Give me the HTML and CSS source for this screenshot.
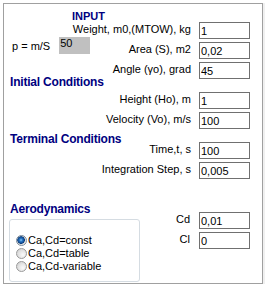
FILE: index.html
```html
<!DOCTYPE html>
<html lang="en">
<head>
    <meta charset="UTF-8">
    <title>Input</title>
    <link rel="stylesheet" href="styles.css">
</head>
<body>

    <div class="panel">
        <div class="title">INPUT</div>
        <div class="group">
            <div class="row">
                <label>Weight, m0,(MTOW), kg</label>
                <input type="text" value="1">
            </div>
            <div class="row">
                <div class="density">
                    <span>p = m/S</span>
                    <span class="density-value">50</span>
                </div>
                <label>Area (S), m2</label>
                <input type="text" value="0,02">
            </div>
            <div class="row">
                <label>Angle (γo), grad</label>
                <input type="text" value="45">
            </div>
        </div>

        <div class="section-title initial">Initial Conditions</div>
        <div class="group">
            <div class="row">
                <label>Height (Ho), m</label>
                <input type="text" value="1">
            </div>
            <div class="row">
                <label>Velocity (Vo), m/s</label>
                <input type="text" value="100">
            </div>
        </div>

        <div class="section-title terminal">Terminal Conditions</div>
        <div class="group">
            <div class="row">
                <label>Time,t, s</label>
                <input type="text" value="100">
            </div>
            <div class="row">
                <label>Integration Step, s</label>
                <input type="text" value="0,005">
            </div>
        </div>

        <div class="aero">
            <div class="aero-left">
                <div class="section-title aero-title">Aerodynamics</div>
                <div class="choices">
                    <div class="choice"><span class="dot checked"></span>Ca,Cd=const</div>
                    <div class="choice"><span class="dot"></span>Ca,Cd=table</div>
                    <div class="choice"><span class="dot"></span>Ca,Cd-variable</div>
                </div>
            </div>
            <div class="aero-right">
                <div class="row">
                    <label>Cd</label>
                    <input type="text" value="0,01">
                </div>
                <div class="row">
                    <label>Cl</label>
                    <input type="text" value="0">
                </div>
            </div>
        </div>
    </div>

</body>
</html>
```

FILE: styles.css
```css
body {
    margin: 0;
    background: #ffffff;
    font-family: "Liberation Sans", Arial, sans-serif;
    font-size: 11px;
    color: #000000;
}

.panel {
    box-sizing: border-box;
    width: 260px;
    height: 281px;
    margin: 3px;
    padding: 6px 12px 0 0;
    border: 1px solid #a0a0a0;
    background: #ffffff;
    box-shadow: 2px 0 0 #f0f0f0;
}

.title {
    height: 12px;
    line-height: 12px;
    padding-left: 68px;
    font-weight: bold;
    color: #000080;
}

.group {
    display: flex;
    flex-direction: column;
    gap: 3px;
}

.row {
    display: flex;
    justify-content: flex-end;
    align-items: flex-start;
    height: 17px;
}

    .row label {
        padding-top: 1px;
        margin-right: 8px;
        line-height: 13px;
    }

    .row input {
        box-sizing: border-box;
        width: 51px;
        height: 17px;
        margin: 0;
        padding: 0 1px;
        border: 1px solid #707070;
        border-radius: 0;
        font-family: "Liberation Sans", Arial, sans-serif;
        font-size: 11px;
        color: #000000;
        outline: none;
    }

.density {
    display: flex;
    align-items: flex-start;
    margin-top: -5px;
    margin-right: auto;
    margin-left: 8px;
}

    .density span {
        margin-top: 3px;
        line-height: 13px;
    }

    .density .density-value {
        box-sizing: border-box;
        width: 31px;
        height: 17px;
        margin: 0 0 0 9px;
        padding-left: 1px;
        background: #c0c0c0;
    }

.section-title {
    height: 12px;
    line-height: 12px;
    padding-left: 6px;
    font-size: 12px;
    font-weight: bold;
    color: #000080;
    letter-spacing: -0.2px;
}

.initial {
    margin: -3px 0 4px;
}

.terminal {
    margin: 4px 0 -3px;
}

.aero {
    display: flex;
    margin-top: 24px;
    padding-left: 5px;
}

.aero-left {
    width: 131px;
}

    .aero-left .aero-title {
        padding-left: 1px;
        margin-bottom: 4px;
    }

.choices {
    box-sizing: border-box;
    height: 63px;
    padding: 14px 0 0 6px;
    border: 1px solid #d5dce2;
    border-radius: 3px;
}

.choice {
    display: flex;
    align-items: center;
    height: 13px;
    line-height: 13px;
}

.dot {
    box-sizing: border-box;
    width: 11px;
    height: 11px;
    margin-right: 1px;
    border: 1px solid #9a9a9a;
    border-radius: 50%;
    background: radial-gradient(circle at 65% 65%, #fafafa 0, #e6e6e6 45%, #c8c8c8 100%);
}

    .dot.checked {
        border-color: #7a8a9a;
        background: radial-gradient(circle at 45% 45%, #8ccaf5 0, #2a78c8 1.5px, #0c3f80 3.5px, #d0d0d0 4px, #f2f2f2 5px);
    }

.aero-right {
    flex: 1;
    display: flex;
    flex-direction: column;
    gap: 3px;
    padding-top: 9px;
}

    .aero-right label {
        margin-right: 9px;
    }
```
